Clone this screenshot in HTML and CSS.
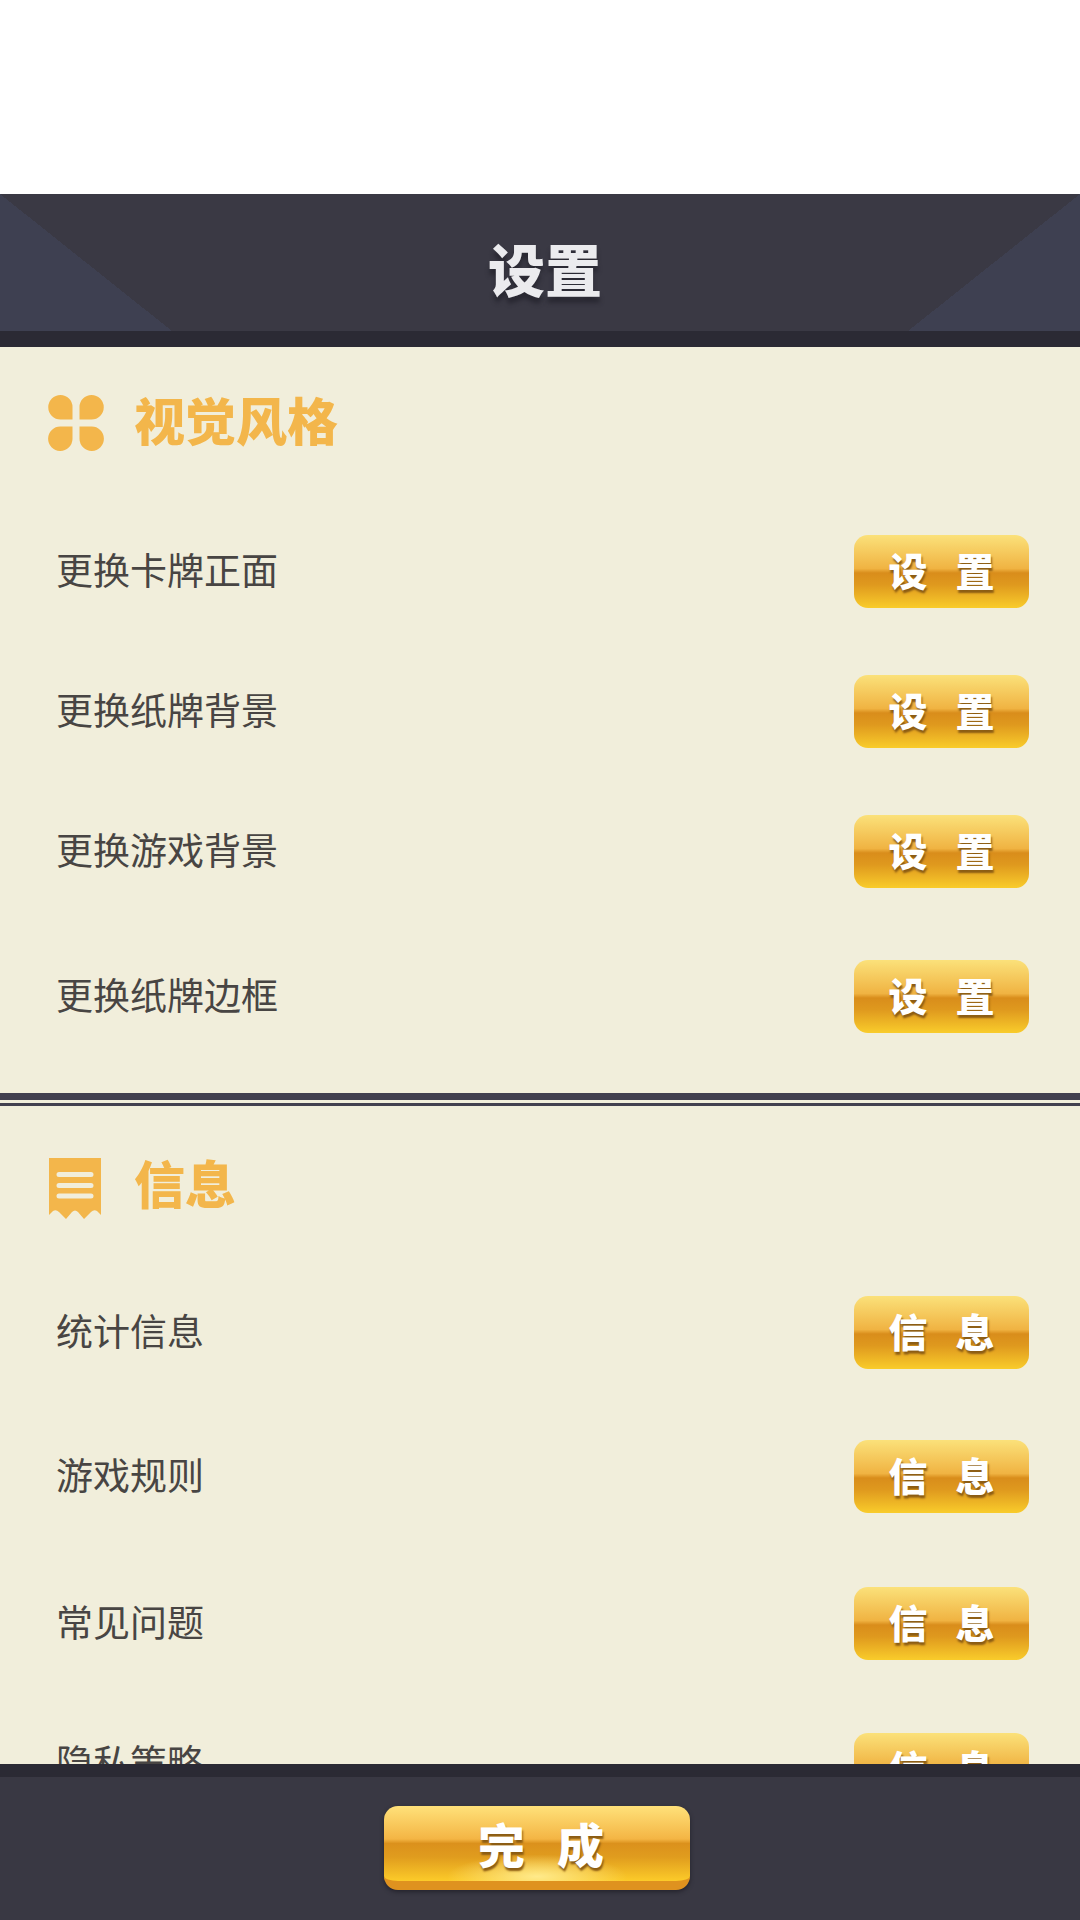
FILE: index.html
```html
<!DOCTYPE html>
<html lang="zh-CN">
<head>
<meta charset="utf-8">
<meta name="viewport" content="width=device-width, initial-scale=1">
<title>设置</title>
<link rel="stylesheet" href="styles.css">
</head>
<body>
<div class="app">
  <header class="header">
    <h1 class="title">设置</h1>
  </header>
  <main class="content">
    <section class="section section-style">
      <h2 class="heading">
        <svg class="icon" viewBox="0 0 56 56" aria-hidden="true">
          <path d="M12.500 0A12 12 0 0 1 24.500 12V24.500H12.500A12.200 12.200 0 0 1 12.500 0ZM43.500 0A12.200 12.200 0 0 1 43.500 24.500H31.500V12A12 12 0 0 1 43.500 0ZM12.500 31.500H24.500V44A12.200 12.200 0 1 1 12.500 31.500ZM31.500 31.500H43.500A12.200 12.200 0 1 1 31.500 44Z"/>
        </svg>
        视觉风格
      </h2>
      <ul class="rows">
        <li class="row"><span class="label" id="face">更换卡牌正面</span><button class="btn" type="button" aria-describedby="face"><span>设</span><span>置</span></button></li>
        <li class="row"><span class="label" id="back">更换纸牌背景</span><button class="btn" type="button" aria-describedby="back"><span>设</span><span>置</span></button></li>
        <li class="row"><span class="label" id="scene">更换游戏背景</span><button class="btn" type="button" aria-describedby="scene"><span>设</span><span>置</span></button></li>
        <li class="row"><span class="label" id="frame">更换纸牌边框</span><button class="btn" type="button" aria-describedby="frame"><span>设</span><span>置</span></button></li>
      </ul>
    </section>
    <section class="section section-info">
      <h2 class="heading">
        <svg class="icon icon-note" viewBox="0 0 56 62" aria-hidden="true">
          <path fill-rule="evenodd" d="M1 0H53V57L49 53Q46 51 43 54L36 61L30 54Q27 51 24 54L18 61L11 54Q8 51 5 53L1 57ZM11 14A2.500 2.500 0 0 0 11 19H43A2.500 2.500 0 0 0 43 14ZM11 25A2.500 2.500 0 0 0 11 30H43A2.500 2.500 0 0 0 43 25ZM11 35.500A2.500 2.500 0 0 0 11 40.500H43A2.500 2.500 0 0 0 43 35.500Z"/>
        </svg>
        信息
      </h2>
      <ul class="rows">
        <li class="row"><span class="label" id="stats">统计信息</span><button class="btn" type="button" aria-describedby="stats"><span>信</span><span>息</span></button></li>
        <li class="row"><span class="label" id="rules">游戏规则</span><button class="btn" type="button" aria-describedby="rules"><span>信</span><span>息</span></button></li>
        <li class="row"><span class="label" id="faq">常见问题</span><button class="btn" type="button" aria-describedby="faq"><span>信</span><span>息</span></button></li>
        <li class="row row-top"><span class="label" id="privacy">隐私策略</span><button class="btn" type="button" aria-describedby="privacy"><span>信</span><span>息</span></button></li>
      </ul>
    </section>
  </main>
  <footer class="footer">
    <button class="btn btn-done" type="button"><span>完</span><span>成</span></button>
  </footer>
</div>
</body>
</html>
```

FILE: styles.css
```css
* {
  box-sizing: border-box;
}

body {
  margin: 0;
  background: #fff;
  color: #484543;
  font-family: "Noto Sans CJK SC", sans-serif;
}

.app {
  display: flex;
  flex-direction: column;
  height: 100vh;
  padding-top: 194px;
}

.header {
  flex: none;
  display: flex;
  justify-content: center;
  padding: 33px 0 24px 10px;
  border-bottom: 16px solid #2b2a34;
  background:
    linear-gradient(to top right, #3e4051 50%, transparent 50%) left / 172px 100% no-repeat,
    linear-gradient(to top left, #3e4051 50%, transparent 50%) right / 172px 100% no-repeat,
    #3a3944;
  background-origin: padding-box;
}

.title {
  margin: 0;
  color: #ebebee;
  font-size: 57px;
  font-weight: 900;
  line-height: 80px;
  text-shadow: 0 6px 4px #292832;
}

.content {
  flex: 1;
  min-height: 0;
  overflow-y: auto;
  scrollbar-width: none;
  background: #f1eedb;
}

.section {
  padding: 48px 51px 60px 48px;
}

.section-style {
  border-bottom: 7px solid #42404f;
}

.section-info {
  margin-top: 3px;
  padding-top: 52px;
  border-top: 3px solid #42404f;
}

.heading {
  display: flex;
  align-items: flex-start;
  gap: 30px;
  height: 56px;
  margin: 0 0 84px;
  color: #f3b64b;
  font-size: 51px;
  font-weight: 900;
  line-height: 48px;
}

.section-info .heading {
  margin-bottom: 82px;
}

.icon {
  flex: none;
  width: 56px;
  height: 56px;
  fill: currentColor;
}

.icon-note {
  height: 62px;
}

.rows {
  display: grid;
  grid-template-rows: 140px 140px 145px auto;
  margin: 0;
  padding: 0 0 0 8px;
  list-style: none;
}

.section-info .rows {
  grid-template-rows: 144px 147px 146px auto;
}

.row {
  display: flex;
  align-items: center;
  align-self: start;
  justify-content: space-between;
  font-size: 37px;
  line-height: 56px;
}

.row-top {
  align-items: flex-start;
}

.label {
  padding-bottom: 6px;
}

.btn {
  display: flex;
  align-items: center;
  justify-content: center;
  gap: 28px;
  width: 175px;
  height: 73px;
  padding: 0 0 6px;
  border: 0;
  border-radius: 14px;
  background: linear-gradient(#fbe17a, #f0b342 46%, #d98d1b 52%, #df991e 68%, #f9cc2b);
  color: #fff;
  font-family: inherit;
  font-size: 39px;
  font-weight: 900;
  line-height: 56px;
  text-shadow: 1px 3px 2px #8b5c14;
  cursor: pointer;
}

.footer {
  flex: none;
  display: flex;
  justify-content: center;
  padding: 29px 6px 30px 0;
  border-top: 13px solid #2b2a34;
  background: #393843;
}

.btn-done {
  gap: 32px;
  width: 306px;
  height: 84px;
  padding: 0 0 2px 8px;
  border-bottom: 9px solid #df921f;
  background:
    radial-gradient(ellipse 90px 22px at 50% 94%, #ffea8b, transparent),
    linear-gradient(#ffe17a, #f4b544 44%, #db911c 50%, #e09c1e 68%, #fccb29);
  box-shadow: 0 2px 4px #24232c;
  font-size: 47px;
}
```
